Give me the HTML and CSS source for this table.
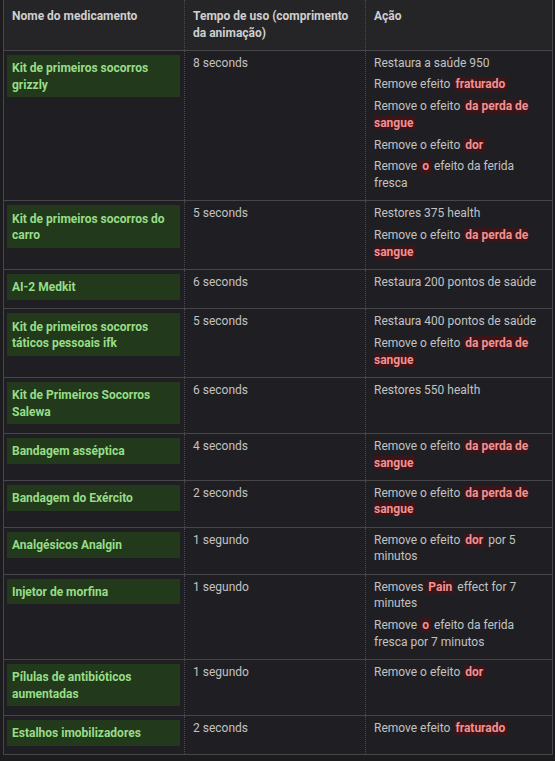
FILE: index.html
```html
<!DOCTYPE html>
<html lang="pt">
<head>
<meta charset="utf-8">
<link rel="stylesheet" href="styles.css">
</head>
<body>
<table class="med">
<colgroup><col class="c1"><col class="c2"><col class="c3"></colgroup>
<thead>
<tr><th>Nome do medicamento</th><th>Tempo de uso (comprimento da animação)</th><th>Ação</th></tr>
</thead>
<tbody>
<tr>
<td><div class="name">Kit de primeiros socorros grizzly</div></td>
<td><p>8 seconds</p></td>
<td><p>Restaura a saúde 950</p><p>Remove efeito <span class="hl">fraturado</span></p><p>Remove o efeito <span class="hl">da perda de sangue</span></p><p>Remove o efeito <span class="hl">dor</span></p><p>Remove <span class="hl">o</span> efeito da ferida fresca</p></td>
</tr>
<tr>
<td><div class="name">Kit de primeiros socorros do carro</div></td>
<td><p>5 seconds</p></td>
<td><p>Restores 375 health</p><p>Remove o efeito <span class="hl">da perda de sangue</span></p></td>
</tr>
<tr>
<td><div class="name">AI-2 Medkit</div></td>
<td><p>6 seconds</p></td>
<td><p>Restaura 200 pontos de saúde</p></td>
</tr>
<tr>
<td><div class="name">Kit de primeiros socorros táticos pessoais ifk</div></td>
<td><p>5 seconds</p></td>
<td><p>Restaura 400 pontos de saúde</p><p>Remove o efeito <span class="hl">da perda de sangue</span></p></td>
</tr>
<tr>
<td><div class="name">Kit de Primeiros Socorros Salewa</div></td>
<td><p>6 seconds</p></td>
<td><p>Restores 550 health</p></td>
</tr>
<tr>
<td><div class="name">Bandagem asséptica</div></td>
<td><p>4 seconds</p></td>
<td><p>Remove o efeito <span class="hl">da perda de sangue</span></p></td>
</tr>
<tr>
<td><div class="name">Bandagem do Exército</div></td>
<td><p>2 seconds</p></td>
<td><p>Remove o efeito <span class="hl">da perda de sangue</span></p></td>
</tr>
<tr>
<td><div class="name">Analgésicos Analgin</div></td>
<td><p>1 segundo</p></td>
<td><p>Remove o efeito <span class="hl">dor</span> por 5 minutos</p></td>
</tr>
<tr>
<td><div class="name">Injetor de morfina</div></td>
<td><p>1 segundo</p></td>
<td><p>Removes <span class="hl">Pain</span> effect for 7 minutes</p><p>Remove <span class="hl">o</span> efeito da ferida fresca por 7 minutos</p></td>
</tr>
<tr>
<td><div class="name">Pílulas de antibióticos aumentadas</div></td>
<td><p>1 segundo</p></td>
<td><p>Remove o efeito <span class="hl">dor</span></p></td>
</tr>
<tr>
<td><div class="name">Estalhos imobilizadores</div></td>
<td><p>2 seconds</p></td>
<td><p>Remove efeito <span class="hl">fraturado</span></p></td>
</tr>
</tbody>
</table>
</body>
</html>
```
FILE: styles.css
```css
html, body {
  margin: 0;
  padding: 0;
  background: #1c1c1f;
}
body {
  font-family: Roboto, "Liberation Sans", sans-serif;
  font-size: 12px;
  line-height: 16.7px;
  color: #c2c2c2;
  padding: 0 3px;
}
.med {
  width: 549px;
  table-layout: fixed;
  border-collapse: collapse;
  background: #1f1f23;
  border: 1px solid #47474b;
  border-top: none;
}
.c1 { width: 181px; }
.c2 { width: 181px; }
.c3 { width: 187px; }
.med th {
  background: #252527;
  color: #cfcfcf;
  font-weight: 700;
  text-align: left;
  vertical-align: top;
  padding: 8px 8px 8.3px 8px;
  border-bottom: 1px solid #47474b;
}
.med td {
  vertical-align: top;
  padding: 4px 8px 8.5px 8px;
  border-top: 1px solid #47474b;
}
.med th + th, .med td + td {
  border-left: 1px dotted #4a4a4e;
}
.med td:first-child {
  padding-left: 3px;
  padding-right: 4px;
}
.med p {
  margin: 0 0 5px 0;
}
.med p:last-child {
  margin-bottom: 0;
}
.name {
  background: #223a1b;
  color: #97dd88;
  font-weight: 700;
  padding: 5.4px 5px 3.8px 5px;
}
.hl {
  background: #3a1519;
  color: #f29191;
  font-weight: 700;
  padding: 0 2px;
}
```
